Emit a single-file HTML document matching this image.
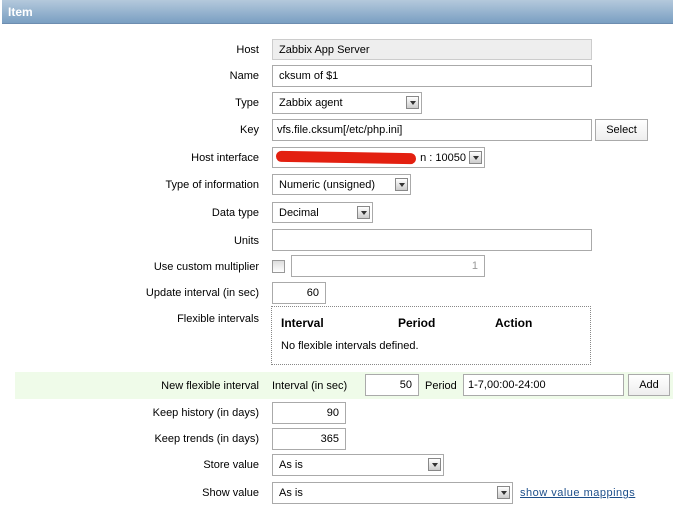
<!DOCTYPE html>
<html><head><style>
body{margin:0;width:673px;height:508px;background:#fff;font-family:"Liberation Sans",Tahoma,sans-serif;font-size:11px;color:#000;position:relative;overflow:hidden}
.a{position:absolute}
.hdr{left:2px;top:0;width:671px;height:24px;background:linear-gradient(#b4c9dc,#7a9fc2);border-bottom:1px solid #6d8db0;color:#fff;font-weight:bold;font-size:12px;line-height:24px;padding-left:6px;box-sizing:border-box}
.l{right:414px;text-align:right;white-space:nowrap}
.i{border:1px solid #aaa;background:#fff;box-sizing:border-box;padding:0 6px;white-space:nowrap;display:flex;align-items:center}
.r{justify-content:flex-end}
.dd{position:absolute;right:2px;top:50%;margin-top:-7px;width:13px;height:13px;border:1px solid #888;background:linear-gradient(#fff,#ccc);box-sizing:border-box}
.dd:after{content:"";position:absolute;left:3px;top:4px;border-left:3px solid transparent;border-right:3px solid transparent;border-top:4px solid #333}
.btn{border:1px solid #aaa;background:linear-gradient(#fff,#eee);box-sizing:border-box;display:flex;align-items:center;justify-content:center}
</style></head><body>
<div class="a hdr">Item</div>

<div class="a l" style="top:44px">Host</div>
<div class="a i" style="left:272px;top:39px;width:320px;height:21px;background:#eee;border-color:#ccc">Zabbix App Server</div>

<div class="a l" style="top:70px">Name</div>
<div class="a i" style="left:272px;top:65px;width:320px;height:22px">cksum of $1</div>

<div class="a l" style="top:97px">Type</div>
<div class="a i" style="left:272px;top:92px;width:150px;height:22px">Zabbix agent<span class="dd"></span></div>

<div class="a l" style="top:124px">Key</div>
<div class="a i" style="left:272px;top:119px;width:320px;height:22px;padding-left:4px">vfs.file.cksum[/etc/php.ini]</div>
<div class="a btn" style="left:595px;top:119px;width:53px;height:22px">Select</div>

<div class="a l" style="top:152px">Host interface</div>
<div class="a i r" style="left:272px;top:147px;width:213px;height:21px;padding-right:18px">n : 10050<span class="dd"></span></div>
<div class="a" style="left:276px;top:152px;width:140px;height:11px;background:#e32010;border-radius:6px;transform:rotate(1deg)"></div>

<div class="a l" style="top:179px">Type of information</div>
<div class="a i" style="left:272px;top:174px;width:139px;height:21px">Numeric (unsigned)<span class="dd"></span></div>

<div class="a l" style="top:207px">Data type</div>
<div class="a i" style="left:272px;top:202px;width:101px;height:21px">Decimal<span class="dd"></span></div>

<div class="a l" style="top:235px">Units</div>
<div class="a i" style="left:272px;top:229px;width:320px;height:22px"></div>

<div class="a l" style="top:261px">Use custom multiplier</div>
<div class="a" style="left:272px;top:260px;width:13px;height:13px;border:1px solid #999;box-sizing:border-box;background:linear-gradient(#ddd,#fff)"></div>
<div class="a i r" style="left:291px;top:255px;width:194px;height:22px;color:#999">1</div>

<div class="a l" style="top:287px">Update interval (in sec)</div>
<div class="a i r" style="left:272px;top:282px;width:54px;height:22px">60</div>

<div class="a l" style="top:313px">Flexible intervals</div>
<div class="a" style="left:271px;top:306px;width:320px;height:59px;border:1px dotted #888;box-sizing:border-box"></div>
<div class="a" style="left:281px;top:316px;font-weight:bold;font-size:12px">Interval</div>
<div class="a" style="left:398px;top:316px;font-weight:bold;font-size:12px">Period</div>
<div class="a" style="left:495px;top:316px;font-weight:bold;font-size:12px">Action</div>
<div class="a" style="left:281px;top:340px">No flexible intervals defined.</div>

<div class="a" style="left:15px;top:372px;width:658px;height:27px;background:#effbe9"></div>
<div class="a l" style="top:380px">New flexible interval</div>
<div class="a" style="left:272px;top:380px">Interval (in sec)</div>
<div class="a i r" style="left:365px;top:374px;width:54px;height:22px">50</div>
<div class="a" style="left:425px;top:380px">Period</div>
<div class="a i" style="left:463px;top:374px;width:161px;height:22px;padding-left:4px">1-7,00:00-24:00</div>
<div class="a btn" style="left:628px;top:374px;width:42px;height:22px">Add</div>

<div class="a l" style="top:407px">Keep history (in days)</div>
<div class="a i r" style="left:272px;top:402px;width:74px;height:22px">90</div>

<div class="a l" style="top:433px">Keep trends (in days)</div>
<div class="a i r" style="left:272px;top:428px;width:74px;height:22px">365</div>

<div class="a l" style="top:459px">Store value</div>
<div class="a i" style="left:272px;top:454px;width:172px;height:22px">As is<span class="dd"></span></div>

<div class="a l" style="top:487px">Show value</div>
<div class="a i" style="left:272px;top:482px;width:241px;height:22px">As is<span class="dd"></span></div>
<div class="a" style="left:520px;top:487px;color:#1c4e8a;text-decoration:underline;letter-spacing:0.5px">show value mappings</div>
</body></html>
